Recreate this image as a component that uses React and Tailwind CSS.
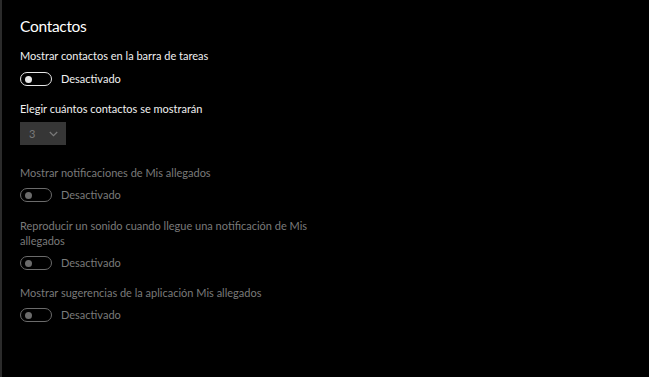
import React from "react";

function Toggle({ disabled }) {
  const c = disabled ? "border-[#6b6b6b]" : "border-[#e6e6e6]";
  const k = disabled ? "bg-[#6b6b6b]" : "bg-[#e6e6e6]";
  return (
    <div className="flex items-center gap-[9px] h-[14px]">
      <div className={`w-[32px] h-[14px] rounded-full border-[1.5px] ${c} flex items-center pl-[3.5px]`}>
        <div className={`w-[7px] h-[7px] rounded-full ${k}`} />
      </div>
      <span className={disabled ? "text-[#7a7a7a]" : "text-[#f0f0f0]"}>Desactivado</span>
    </div>
  );
}

export default function App() {
  return (
    <div
      className="w-[649px] h-[377px] bg-black flex text-[11px] leading-[16px]"
      style={{ fontFamily: 'Lato, "Open Sans", sans-serif' }}
    >
      <div className="w-[2px] h-full bg-[#2b2b2b]" />
      <div className="flex flex-col pl-[18px] pt-[14px]">
        <div className="text-[15.5px] leading-[24px] tracking-[-0.3px] text-white">Contactos</div>
        <div className="mt-[10px] text-[#f0f0f0]">Mostrar contactos en la barra de tareas</div>
        <div className="mt-[8px]"><Toggle /></div>
        <div className="mt-[15px] text-[#f0f0f0]">Elegir cuántos contactos se mostrarán</div>
        <div className="mt-[5px] w-[46px] h-[23px] bg-[#363636] flex items-center pl-[9px] gap-[14px]">
          <span className="text-[#7a7a7a]">3</span>
          <svg width="9" height="6" viewBox="0 0 9 6" fill="none">
            <path d="M0.8 1l3.7 3.7L8.2 1" stroke="#7a7a7a" strokeWidth="1.2" />
          </svg>
        </div>
        <div className="mt-[20px] text-[#7a7a7a]">Mostrar notificaciones de Mis allegados</div>
        <div className="mt-[7px]"><Toggle disabled /></div>
        <div className="mt-[16px] text-[#7a7a7a] leading-[15px] w-[300px]">
          Reproducir un sonido cuando llegue una notificación de Mis allegados
        </div>
        <div className="mt-[8px]"><Toggle disabled /></div>
        <div className="mt-[15px] text-[#7a7a7a]">Mostrar sugerencias de la aplicación Mis allegados</div>
        <div className="mt-[7px]"><Toggle disabled /></div>
      </div>
    </div>
  );
}
